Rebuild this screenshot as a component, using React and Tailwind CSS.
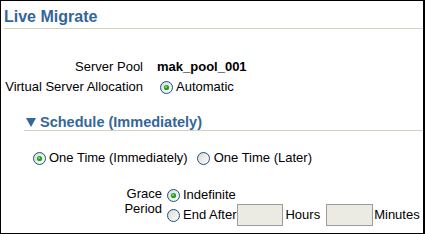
import React from "react";

function Radio({ checked }) {
  return (
    <svg width="13" height="13" viewBox="0 0 13 13" className="shrink-0">
      <defs>
        <linearGradient id={checked ? "rgc" : "rgu"} x1="0" y1="0" x2="1" y2="1">
          <stop offset="0" stopColor="#d8d8d2" />
          <stop offset="1" stopColor="#ffffff" />
        </linearGradient>
      </defs>
      <circle cx="6.5" cy="6.5" r="6" fill={`url(#${checked ? "rgc" : "rgu"})`} stroke="#1c5180" strokeWidth="1" />
      {checked && (
        <>
          <circle cx="6.5" cy="6.5" r="2.6" fill="#21a121" />
          <circle cx="6" cy="6" r="1.1" fill="#7fd97f" />
        </>
      )}
    </svg>
  );
}

function Field({ className }) {
  return <div className={`h-[22px] border border-[#9c9c9c] bg-[#ebebe4] ${className}`} />;
}

export default function App() {
  return (
    <div
      className="w-[425px] h-[234px] border border-black border-r-2 bg-white text-black text-[13px] overflow-hidden"
      style={{ fontFamily: '"Liberation Sans", Arial, sans-serif' }}
    >
      {/* Title */}
      <div className="ml-[3px] pt-[6px] pb-[2px] border-b border-[#d1d3bd]">
        <h1 className="text-[16px] leading-[19px] font-bold text-[#336699]">Live Migrate</h1>
      </div>

      {/* Pool info */}
      <div className="mt-[28px] grid grid-cols-[142px_1fr] gap-x-[14px]">
        <div className="h-[20px] flex items-center justify-end">Server Pool</div>
        <div className="h-[20px] flex items-center font-bold">mak_pool_001</div>
        <div className="h-[20px] flex items-center justify-end whitespace-nowrap">Virtual Server Allocation</div>
        <div className="h-[20px] flex items-center">
          <span className="ml-[3px] mr-[3px] flex"><Radio checked /></span>
          Automatic
        </div>
      </div>

      {/* Schedule */}
      <div className="ml-[23px] mt-[17px]">
        <div className="h-[17px] flex items-center border-b border-[#d1d3bd]">
          <svg width="10" height="10" viewBox="0 0 10 10" className="ml-[2px] mr-[4px]">
            <path d="M0 1 H10 L5 10 Z" fill="#336699" />
          </svg>
          <span className="text-[14.5px] leading-[17px] font-bold text-[#336699]">Schedule (Immediately)</span>
        </div>

        <div className="mt-[17px] h-[20px] flex items-center pl-[9px] whitespace-nowrap">
          <Radio checked />
          <span className="ml-[3px]">One Time (Immediately)</span>
          <span className="ml-[9px] flex"><Radio /></span>
          <span className="ml-[4px]">One Time (Later)</span>
        </div>

        <div className="mt-[17px] flex whitespace-nowrap">
          <div className="w-[138px] pt-[1px] text-right leading-[15px]">
            Grace<br />Period
          </div>
          <div className="ml-[5px]">
            <div className="h-[20px] flex items-center">
              <Radio checked />
              <span className="ml-[3px]">Indefinite</span>
            </div>
            <div className="h-[20px] flex items-center">
              <Radio />
              <span className="ml-[3px]">End After</span>
              <Field className="ml-[1px] w-[46px]" />
              <span className="ml-[2px]">Hours</span>
              <Field className="ml-[6px] w-[47px]" />
              <span className="ml-[1px]">Minutes</span>
            </div>
          </div>
        </div>
      </div>
    </div>
  );
}
